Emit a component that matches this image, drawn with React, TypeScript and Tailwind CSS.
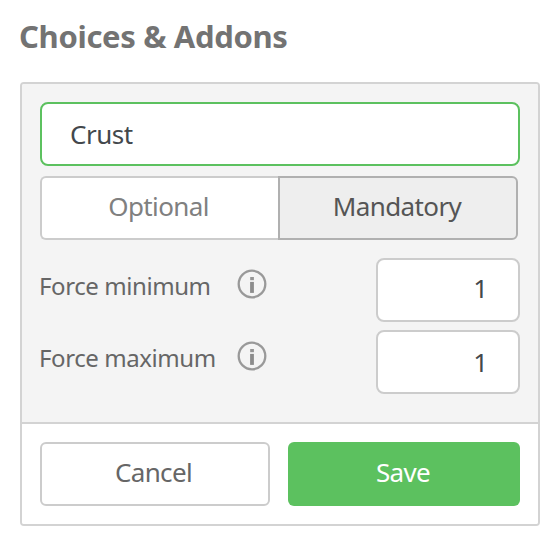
import { useState } from "react";

type Mode = "optional" | "mandatory";

//説明アイコン
function InfoIcon() {
    return (
        <svg className="block h-8 w-8" viewBox="0 0 32 32" fill="none">
            <circle cx="16" cy="16" r="13.3" stroke="#999" strokeWidth="2.3" />
            <rect x="14.2" y="9" width="3.7" height="3.2" fill="#959595" />
            <rect x="14.1" y="13.9" width="3.8" height="11" fill="#8c8c8c" />
        </svg>
    )
}

//数値の入力行
function LimitRow({ label, value, inputPadding, onChange }: { label: string; value: string; inputPadding: string; onChange: (value: string) => void }) {
    return (
        <div className="flex h-16 items-start">
            <span className="-ml-px w-[197px] whitespace-nowrap pt-[11px] text-[24px] leading-[33px] tracking-[-0.42px] text-[#666]">{label}</span>
            <span className="pt-[10px]"><InfoIcon /></span>
            <input
                className={`ml-auto h-16 w-36 rounded-lg border-2 border-[#ccc] bg-white pr-[30px] text-right text-[26px] text-[#43484c] outline-none ${inputPadding}`}
                aria-label={label}
                value={value}
                onChange={(e) => onChange(e.target.value)}
            />
        </div>
    )
}

export default function App() {
    const [name, setName] = useState<string>("Crust");
    const [mode, setMode] = useState<Mode>("mandatory");
    const [minimum, setMinimum] = useState<string>("1");
    const [maximum, setMaximum] = useState<string>("1");

    const active = "border-[#b0b0b0] bg-[#eee] text-[#555]";
    const inactive = "border-[#ccc] bg-white text-[#808080]";

    return (
        <div className="h-[536px] w-[554px] overflow-hidden bg-white pl-5 pt-[15px] font-['Noto_Sans','Open_Sans',sans-serif]">
            <h2 className="-ml-px h-[67px] text-[31px] font-bold leading-[42px] tracking-[-0.33px] text-[#737373]">Choices &amp; Addons</h2>
            <div className="h-[444px] w-[520px] overflow-hidden rounded-[4px] border-2 border-[#d3d3d3]">
                <div className="h-[340px] border-b-2 border-[#d3d3d3] bg-[#f4f4f4] px-[18px] pt-[18px]">
                    <input
                        className="block h-16 w-full rounded-lg border-2 border-[#5cc15f] bg-white px-7 text-[26px] tracking-[-0.5px] text-[#43484c] outline-none"
                        aria-label="Name"
                        value={name}
                        onChange={(e) => setName(e.target.value)}
                    />
                    <div className="mt-[10px] flex w-[478px] text-[26px] tracking-[-0.62px]">
                        <button className={`h-16 w-[238px] rounded-l-md border-2 border-r-0 pb-1 pr-[3px] ${mode === "optional" ? active : inactive}`} onClick={() => setMode("optional")}>Optional</button>
                        <button className={`h-16 w-[240px] rounded-r-md border-2 pb-1 pr-[2px] ${mode === "mandatory" ? active : inactive}`} onClick={() => setMode("mandatory")}>Mandatory</button>
                    </div>
                    <div className="mt-[18px] flex flex-col gap-2">
                        <LimitRow label="Force minimum" value={minimum} inputPadding="pb-1" onChange={setMinimum} />
                        <LimitRow label="Force maximum" value={maximum} inputPadding="pb-0" onChange={setMaximum} />
                    </div>
                </div>
                <div className="flex h-[100px] gap-[18px] bg-white p-[18px] text-[26px] tracking-[-0.65px]">
                    <button className="h-16 w-[230px] rounded-md border-2 border-[#ccc] bg-white pb-1 pr-[3px] text-[#666]">Cancel</button>
                    <button className="h-16 w-[232px] rounded-md bg-[#5cc15f] pb-1 pr-[2px] text-white">Save</button>
                </div>
            </div>
        </div>
    )
}
